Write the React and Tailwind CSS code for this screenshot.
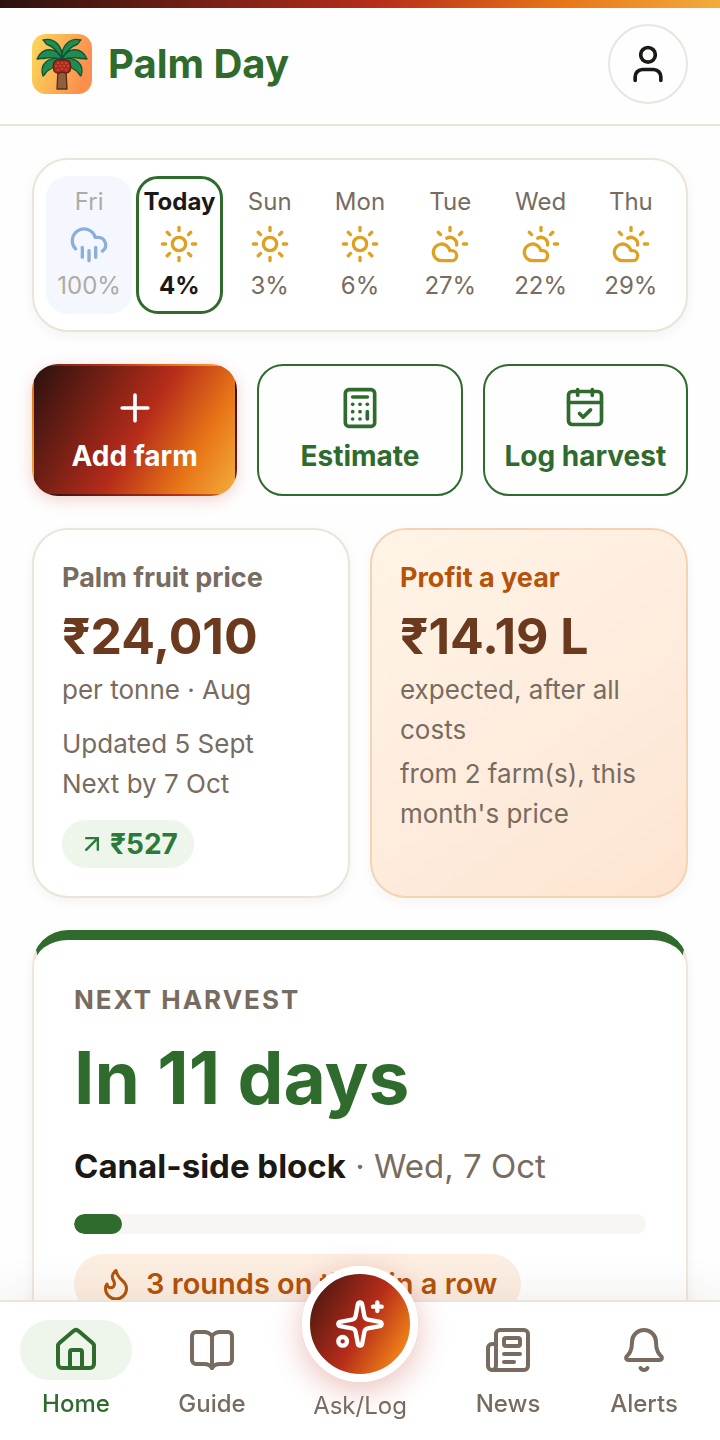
import {
  ArrowUpRight,
  Bell,
  Calculator,
  CloudRain,
  CloudSun,
  Flame,
  House,
  Newspaper,
  Plus,
  Sparkles,
  Sun,
  User,
} from "lucide-react";

const forecast = [
  { day: "Fri", icon: CloudRain, rain: "100%", state: "past" },
  { day: "Today", icon: Sun, rain: "4%", state: "today" },
  { day: "Sun", icon: Sun, rain: "3%" },
  { day: "Mon", icon: Sun, rain: "6%" },
  { day: "Tue", icon: CloudSun, rain: "27%" },
  { day: "Wed", icon: CloudSun, rain: "22%" },
  { day: "Thu", icon: CloudSun, rain: "29%" },
];

const dayStyles = {
  past: {
    cell: "border-transparent bg-[#f4f7fe] text-[#aeaaa5]",
    icon: "text-[#8aafd8]",
  },
  today: {
    cell: "border-[#2e6b2c] font-bold text-[#1c1815]",
    icon: "text-[#dfa122]",
  },
  normal: {
    cell: "border-transparent text-[#786b60]",
    icon: "text-[#dfa122]",
  },
};

function CalendarTick({ className }) {
  return (
    <svg
      viewBox="0 0 24 24"
      fill="none"
      stroke="currentColor"
      strokeWidth="2"
      strokeLinecap="round"
      strokeLinejoin="round"
      className={className}
      aria-hidden="true"
    >
      <rect x="3" y="3" width="18" height="18" rx="2" />
      <path d="M8 2v3M16 2v3M3 9h18M9 15l2 2 4-4" />
    </svg>
  );
}

function OpenBook({ className }) {
  return (
    <svg
      viewBox="0 0 24 24"
      fill="none"
      stroke="currentColor"
      strokeWidth="2"
      strokeLinecap="round"
      strokeLinejoin="round"
      className={className}
      aria-hidden="true"
    >
      <path d="M12 5v16" />
      <path d="M12 5C11 3.700 9.600 3 8 3H4a2 2 0 0 0-2 2v12a2 2 0 0 0 2 2h4c1.800 0 3.200.600 4 2 .800-1.400 2.200-2 4-2h4a2 2 0 0 0 2-2V5a2 2 0 0 0-2-2h-4c-1.600 0-3 .700-4 2z" />
    </svg>
  );
}

function PalmLogo({ className }) {
  return (
    <svg viewBox="0 0 60 60" className={className} aria-hidden="true">
      <defs>
        <linearGradient id="palm-bg" x1="0" y1="0" x2="1" y2="0.3">
          <stop offset="0" stopColor="#fbd95a" />
          <stop offset="1" stopColor="#fb8f4e" />
        </linearGradient>
      </defs>
      <rect width="60" height="60" rx="14" fill="url(#palm-bg)" />
      <path
        d="M26 37h8l1 18H25z"
        fill="#8f5f3c"
        stroke="#5a2e18"
        strokeWidth="1.400"
        strokeLinejoin="round"
      />
      <g fill="#218c4f" stroke="#0f5236" strokeWidth="1.300" strokeLinejoin="round">
        <path d="M30 24C31 13 23 3 11 6c2 1 2 4 5 5 5 1 9 6 14 13z" />
        <path d="M30 24C29 13 37 3 49 6c-2 1-2 4-5 5-5 1-9 6-14 13z" />
        <path d="M30 26C25 12 10 13 5 25c4-1 5 0 9-1 6-1 11 0 16 2z" />
        <path d="M30 26c5-14 20-13 25-1-4-1-5 0-9-1-6-1-11 0-16 2z" />
        <path d="M29 25C16 22 7 31 11 42c3-2 2-4 6-6 4-2 8-5 12-11z" />
        <path d="M31 25c13-3 22 6 18 17-3-2-2-4-6-6-4-2-8-5-12-11z" />
      </g>
      <path
        d="M23 27c3-2 5-1 7-1s4-1 7 1c2 2 2 7 1 10-2 3-6 2-8 1-2 1-6 2-8-1-1-3-1-8 1-10z"
        fill="#a92d1f"
        stroke="#641a12"
        strokeWidth="1.300"
      />
      <g fill="#dc4a31">
        <circle cx="26" cy="29" r="1" />
        <circle cx="30" cy="29" r="1" />
        <circle cx="34" cy="29" r="1" />
        <circle cx="24" cy="32" r="1" />
        <circle cx="28" cy="32" r="1" />
        <circle cx="32" cy="32" r="1" />
        <circle cx="36" cy="32" r="1" />
        <circle cx="26" cy="36" r="1" />
        <circle cx="30" cy="35" r="1" />
        <circle cx="34" cy="36" r="1" />
      </g>
    </svg>
  );
}

function Header() {
  return (
    <header>
      <div className="h-2 bg-[linear-gradient(120deg,#2a110e_0%,#b62c1a_52%,#e87617_78%,#f3ad3d_100%)]" />
      <div className="flex items-center justify-between border-b-2 border-[#e8e4da] px-8 pt-4 pb-5">
        <a href="#home" className="flex items-center gap-4">
          <PalmLogo className="size-15" />
          <span className="text-[40px] leading-12 font-bold text-[#2e6b2c]">
            Palm Day
          </span>
        </a>
        <button
          type="button"
          aria-label="Account"
          className="flex size-20 items-center justify-center rounded-full border-2 border-[#e8e6df] text-[#1c1815]"
        >
          <User className="size-11" />
        </button>
      </div>
    </header>
  );
}

function Forecast() {
  return (
    <section className="grid grid-cols-7 gap-1 rounded-[36px] border-2 border-[#ebe4d8] bg-white px-3 py-4 shadow-[0_4px_12px_rgba(60,40,20,0.05)]">
      {forecast.map(({ day, icon: Icon, rain, state }) => {
        const style = dayStyles[state || "normal"];
        return (
          <div
            key={day}
            className={`flex flex-col items-center gap-[7px] rounded-[22px] border-3 pt-2 pb-2.5 text-[24px] leading-[30px] ${style.cell}`}
          >
            <span>{day}</span>
            <Icon className={`size-10 ${style.icon}`} />
            <span>{rain}</span>
          </div>
        );
      })}
    </section>
  );
}

function Actions() {
  const base =
    "flex flex-col items-center rounded-[26px] border-2 pt-5 pb-3 text-[28px] leading-13 font-bold whitespace-nowrap";
  return (
    <section className="grid grid-cols-3 gap-5">
      <button
        type="button"
        className={`${base} border-transparent bg-[linear-gradient(120deg,#2a110e_0%,#b62c1a_52%,#e87617_78%,#f3ad3d_100%)] text-white shadow-[0_4px_16px_rgba(182,44,26,0.2)]`}
      >
        <Plus className="size-11" />
        Add farm
      </button>
      <button type="button" className={`${base} border-[#2e6b2c] text-[#2e6b2c]`}>
        <Calculator className="size-11" />
        Estimate
      </button>
      <button type="button" className={`${base} border-[#2e6b2c] text-[#2e6b2c]`}>
        <CalendarTick className="size-11" />
        Log harvest
      </button>
    </section>
  );
}

function Stats() {
  const card =
    "rounded-[36px] border-2 p-7 text-[26px] leading-10 text-[#786b60] shadow-[0_4px_12px_rgba(60,40,20,0.05)]";
  return (
    <section className="grid grid-cols-2 gap-5">
      <article className={`${card} border-[#ebe4d8] bg-white`}>
        <h2 className="text-[27px] leading-10 font-bold">Palm fruit price</h2>
        <p className="pt-2 pb-1 text-[50px] leading-15 font-bold text-[#6b3a1e]">
          ₹24,010
        </p>
        <p>per tonne · Aug</p>
        <p className="mt-3.5">Updated 5 Sept</p>
        <p>Next by 7 Oct</p>
        <p className="mt-4 flex h-12 w-fit items-center gap-1 rounded-full bg-[#eef5ea] px-4 text-[28px] font-bold text-[#2b7a3d]">
          <ArrowUpRight className="size-7" />
          ₹527
        </p>
      </article>
      <article
        className={`${card} border-[#f2d4b5] bg-[linear-gradient(145deg,#fff4e6_0%,#feecdd_55%,#fde4d0_100%)]`}
      >
        <h2 className="text-[27px] leading-10 font-bold text-[#b45309]">
          Profit a year
        </h2>
        <p className="pt-2 pb-1 text-[50px] leading-15 font-bold text-[#6b3a1e]">
          ₹14.19 L
        </p>
        <p>expected, after all costs</p>
        <p className="mt-1">from 2 farm(s), this month's price</p>
      </article>
    </section>
  );
}

function NextHarvest() {
  return (
    <section className="rounded-[36px] border-2 border-t-10 border-[#f0e7dc] border-t-[#2e6b2c] bg-white p-10 shadow-[0_4px_12px_rgba(60,40,20,0.05)]">
      <h2 className="text-[26px] leading-10 font-bold tracking-[2px] text-[#786b60] uppercase">
        Next harvest
      </h2>
      <p className="mt-3.5 text-[73px] leading-22 font-bold text-[#2e6b2c]">
        In 11 days
      </p>
      <p className="mt-5 text-[33px] leading-12 text-[#786b60]">
        <strong className="text-[#1c1815]">Canal-side block</strong> · Wed, 7 Oct
      </p>
      <div className="mt-6 h-5 overflow-hidden rounded-full bg-[#f8f6f2]">
        <div className="h-full w-12 rounded-full bg-[#2e6b2c]" />
      </div>
      <p className="mt-5 flex h-15 w-fit items-center gap-3 rounded-full bg-[#fdeee2] px-6 text-[29px] font-semibold whitespace-nowrap text-[#b45309]">
        <Flame className="size-9" />
        3 rounds on time in a row
      </p>
    </section>
  );
}

function NavItem({ icon: Icon, label, active }) {
  return (
    <a
      href={`#${label.toLowerCase()}`}
      className={`flex flex-1 flex-col items-center gap-1 text-[24px] leading-10 font-medium ${
        active ? "text-[#2e6b2c]" : "text-[#786b60]"
      }`}
    >
      <span
        className={`flex h-15 w-28 items-center justify-center rounded-full ${
          active ? "bg-[#eef5ea]" : ""
        }`}
      >
        <Icon className="size-12" />
      </span>
      {label}
    </a>
  );
}

function BottomNav() {
  return (
    <nav className="fixed inset-x-0 bottom-0 flex h-35 border-t-2 border-[#ebe4d8] bg-white px-2 pt-4.5 shadow-[0_-8px_40px_rgba(60,40,20,0.07)]">
      <NavItem icon={House} label="Home" active />
      <NavItem icon={OpenBook} label="Guide" />
      <a
        href="#ask"
        className="-mt-13.5 flex w-40 flex-col items-center gap-1 text-[24px] leading-10 text-[#786b60]"
      >
        <span className="flex size-29 items-center justify-center rounded-full border-8 border-white bg-[linear-gradient(120deg,#2a110e_0%,#b62c1a_52%,#e87617_78%,#f3ad3d_100%)] bg-origin-border text-white shadow-[0_8px_32px_rgba(182,44,26,0.3)]">
          <Sparkles className="size-13" />
        </span>
        Ask/Log
      </a>
      <NavItem icon={Newspaper} label="News" />
      <NavItem icon={Bell} label="Alerts" />
    </nav>
  );
}

function App() {
  return (
    <div className="min-h-screen bg-[#fefefe] font-[Inter,'Noto_Sans',sans-serif]">
      <Header />
      <main className="flex flex-col gap-8 px-8 pt-8 pb-20">
        <Forecast />
        <Actions />
        <Stats />
        <NextHarvest />
      </main>
      <BottomNav />
    </div>
  );
}

export default App;
